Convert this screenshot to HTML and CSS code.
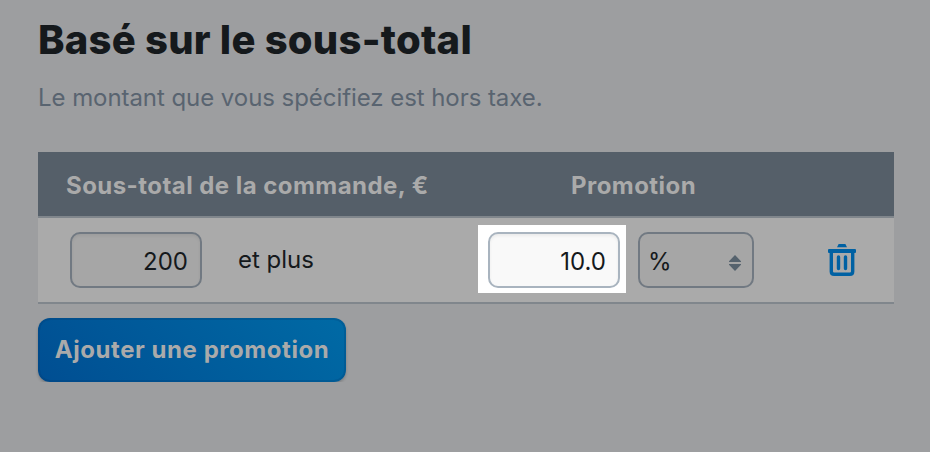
FILE: index.html
```
<!DOCTYPE html>
<html lang="fr">
<head>
    <meta charset="UTF-8">
    <title>Basé sur le sous-total</title>
    <link rel="stylesheet" href="styles.css">
</head>
<body>
    <h1>Basé sur le sous-total</h1>
    <p class="hint">Le montant que vous spécifiez est hors taxe.</p>

    <div class="table">
        <div class="table_head">
            <div class="col_subtotal">Sous-total de la commande, €</div>
            <div class="col_promo">Promotion</div>
        </div>
        <div class="table_row">
            <input type="text" class="field" name="subtotal" value="200">
            <span class="and_more">et plus</span>
            <div class="highlight">
                <input type="text" class="field" name="discount" value="10.0">
            </div>
            <div class="select">
                <span>%</span>
                <svg width="12" height="16" viewBox="0 0 12 16">
                    <path d="M6 0L12 6.2V7H0V6.2Z M6 16L12 9.8V9H0V9.8Z" fill="#55626d"/>
                </svg>
            </div>
            <button type="button" class="remove_button" aria-label="Supprimer">
                <svg width="28" height="32" viewBox="0 0 28 32">
                    <path d="M9 3.2L10.6 0H17.4L19 3.2Z" fill="#0061a3"/>
                    <rect x="0" y="5" width="28" height="4" rx="1" fill="#0061a3"/>
                    <path d="M3.3 8V27.5Q3.3 30.3 6.1 30.3H21.9Q24.7 30.3 24.7 27.5V8" fill="none" stroke="#0061a3" stroke-width="3.4"/>
                    <path d="M10.5 13V24.5M17.5 13V24.5" stroke="#0061a3" stroke-width="3.4" stroke-linecap="round"/>
                </svg>
            </button>
        </div>
    </div>

    <button type="button" class="add_button">Ajouter une promotion</button>
</body>
</html>
```
FILE: styles.css
```
* {
    box-sizing: border-box;
}
body {
    font-family: Inter, "Liberation Sans", sans-serif;
    font-size: 24px;
    margin: 0;
    padding: 16px 36px 0 38px;
    background-color: #9d9ea0;
    color: #15191c;
}
h1 {
    margin: 0;
    font-size: 40px;
    line-height: 48px;
    font-weight: 800;
    letter-spacing: 0.24px;
    white-space: nowrap;
}
.hint {
    margin: 18px 0 38px;
    line-height: 32px;
    color: #596470;
    letter-spacing: -0.06px;
    white-space: nowrap;
}
.table {
    background-color: #aaaaaa;
}
.table_head {
    display: flex;
    align-items: center;
    height: 66px;
    padding: 2px 28px 0;
    background-color: #555f69;
    border-bottom: 2px solid #80868c;
    color: #aaaaaa;
    font-weight: 700;
    letter-spacing: 0.45px;
    white-space: nowrap;
}
.col_subtotal {
    width: 505px;
}
.table_row {
    display: flex;
    align-items: center;
    height: 86px;
    padding-left: 32px;
    border-bottom: 2px solid #80868c;
}
.field {
    width: 132px;
    height: 56px;
    padding: 2px 12px 0 12px;
    border: 2px solid #717982;
    border-radius: 10px;
    background-color: #a6a6a6;
    box-shadow: inset 0 2px 3px rgba(0, 0, 0, 0.06);
    color: #15191c;
    font: inherit;
    text-align: right;
}
.and_more {
    width: 240px;
    margin-left: 36px;
    padding-bottom: 2px;
}
.highlight {
    display: flex;
    align-items: center;
    width: 148px;
    height: 68px;
    margin: -2px 12px 0 0;
    padding-left: 10px;
    background-color: #ffffff;
}
.highlight .field {
    margin-top: 2px;
    border-color: #a9b4bf;
    background-color: #f9f9f9;
}
.select {
    display: flex;
    align-items: center;
    justify-content: space-between;
    width: 116px;
    height: 56px;
    padding: 2px 11px 0 8px;
    border: 2px solid #717982;
    border-radius: 10px;
    background-color: #a6a6a6;
}
.select svg, .remove_button svg {
    display: block;
}
.select svg {
    margin-top: 4px;
}
.remove_button {
    margin-left: 74px;
    padding: 0;
    border: none;
    background: none;
    cursor: pointer;
}
.add_button {
    display: block;
    width: 308px;
    height: 64px;
    margin-top: 14px;
    padding: 0 0 2px;
    border: 2px solid rgba(0, 50, 100, 0.2);
    border-radius: 12px;
    background: linear-gradient(45deg, #004e92, #006aa5) border-box;
    box-shadow: 0 2px 3px rgba(0, 0, 0, 0.2);
    color: #aaaaaa;
    font: inherit;
    font-weight: 700;
    letter-spacing: 0.55px;
    white-space: nowrap;
    cursor: pointer;
}
```
